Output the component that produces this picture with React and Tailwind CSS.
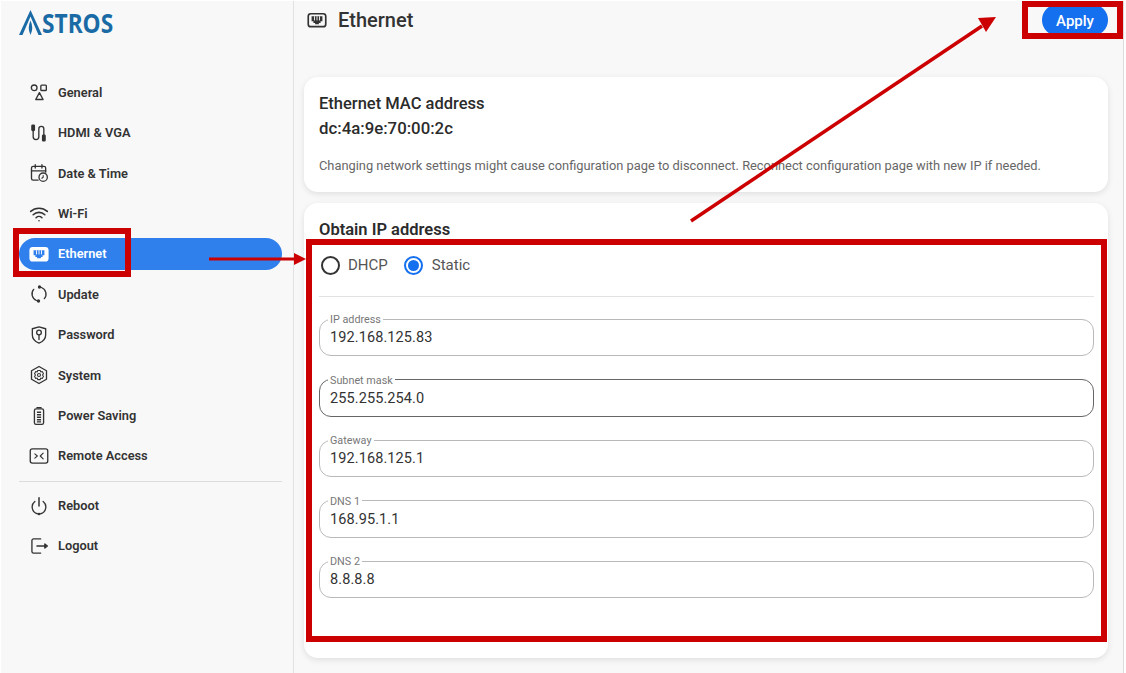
import { Wifi } from 'lucide-react'

const Svg = ({ children, className = 'w-5 h-5' }) => (
  <svg viewBox="0 0 24 24" fill="none" stroke="currentColor" strokeWidth="1.6" strokeLinecap="round" strokeLinejoin="round" className={className}>
    {children}
  </svg>
)

const GeneralIcon = () => (
  <Svg>
    <circle cx="6.2" cy="5.8" r="3.4" />
    <rect x="14.2" y="2.6" width="6.6" height="6.4" rx="1" />
    <path d="M12.5 11.5l4.4 8.3H8.1z" />
  </Svg>
)

const CableIcon = () => (
  <Svg>
    <path d="M5 8v8.5a3.4 3.4 0 0 0 6.8 0V7a3 3 0 0 1 6 0v8" />
    <rect x="3.5" y="2.5" width="3" height="6.5" rx="0.8" fill="currentColor" />
    <rect x="16.3" y="14.5" width="3" height="7" rx="0.8" fill="currentColor" />
  </Svg>
)

const CalendarIcon = () => (
  <Svg>
    <path d="M11 20.5H5a2 2 0 0 1-2-2V6a2 2 0 0 1 2-2h13a2 2 0 0 1 2 2v5" />
    <path d="M7.5 2v4M15.5 2v4M3 9.5h17" />
    <circle cx="17" cy="17" r="5" />
    <path d="M17 15v2.2l-1.6 1" strokeWidth="1.3" />
  </Svg>
)

// port with stripes, the stripe colour follows the surface behind it
const EthernetIcon = ({ className = 'w-5 h-5', frame = 'none', stripe = '#f8f8f8' }) => (
  <Svg className={className}>
    <rect x="1.5" y="4.5" width="21" height="15.5" rx="3" strokeWidth="2" fill={frame} />
    <path d="M5.500 7.500h13v6h-2.200v2h-2v1.500h-4.600v-1.500h-2v-2H5.500z" fill={frame === 'none' ? 'currentColor' : stripe} stroke="none" />
    <path d="M9 7.500v5M12 7.500v5M15 7.500v5" stroke={frame === 'none' ? stripe : '#ffffff'} strokeWidth="1.1" strokeLinecap="butt" />
  </Svg>
)

const UpdateIcon = () => (
  <Svg>
    <path d="M15 4.2a8.5 8.5 0 0 1 3.4 13.4" />
    <path d="M9 19.8A8.5 8.5 0 0 1 5.6 6.4" />
    <circle cx="12.6" cy="3.6" r="1.2" fill="currentColor" />
    <circle cx="11.4" cy="20.4" r="1.2" fill="currentColor" />
  </Svg>
)

const ShieldKeyIcon = () => (
  <Svg>
    <path d="M12 2.2l8 2.3v7.5c0 4.5-3.3 7.9-8 9.8-4.7-1.9-8-5.3-8-9.8V4.500z" />
    <circle cx="12" cy="9" r="2.8" />
    <path d="M12 11.8v5.700" />
  </Svg>
)

const SystemIcon = () => (
  <Svg>
    <path d="M12 1.800l9 5.100v10.200l-9 5.100-9-5.100V6.900z" />
    <path d="M10.500 6.500h3l.6 1.800 1.800-.4 1.500 2.600-1.300 1.500 1.300 1.500-1.500 2.600-1.800-.4-.6 1.800h-3l-.6-1.800-1.800.4-1.500-2.600 1.300-1.500-1.300-1.500 1.500-2.600 1.800.4z" strokeWidth="1.300" />
    <circle cx="12" cy="12" r="1.800" strokeWidth="1.300" />
  </Svg>
)

const BatteryIcon = () => (
  <Svg>
    <rect x="6.500" y="3.500" width="11" height="18.500" rx="2" />
    <path d="M9.500 2h5" />
    <path d="M9.500 7.500h5M9.500 10.500h5M9.500 13.500h5M9.500 16.500h5M9.500 19h5" strokeWidth="1.700" strokeLinecap="butt" />
  </Svg>
)

const RemoteIcon = () => (
  <Svg>
    <rect x="1.500" y="3.500" width="21" height="17" rx="2.500" />
    <path d="M7 9.500l3 2.500-3 2.500" strokeWidth="1.300" />
    <path d="M17 8.500l-3.500 3.500 3.500 3.500" strokeWidth="1.300" />
  </Svg>
)

const RebootIcon = () => (
  <Svg>
    <path d="M12 2v10" strokeWidth="1.800" />
    <path d="M7 6.500a8.500 8.500 0 0 0 3 14.800" />
    <path d="M17 6.500a8.500 8.500 0 0 1-3 14.800" />
    <circle cx="12" cy="21.500" r="0.700" fill="currentColor" />
  </Svg>
)

const LogoutIcon = () => (
  <Svg>
    <path d="M14 3.500H5.500a2 2 0 0 0-2 2v13a2 2 0 0 0 2 2H14" />
    <path d="M9.500 12H20" />
    <path d="M19 9.500l3 2.500-3 2.500z" fill="currentColor" />
  </Svg>
)

const navItems = [
  { name: 'General', icon: <GeneralIcon /> },
  { name: 'HDMI & VGA', icon: <CableIcon /> },
  { name: 'Date & Time', icon: <CalendarIcon /> },
  { name: 'Wi-Fi', icon: <Wifi className="w-5 h-5" strokeWidth={1.9} /> },
  { name: 'Ethernet', icon: <EthernetIcon frame="#ffffff" stripe="#2f80ed" />, active: true },
  { name: 'Update', icon: <UpdateIcon /> },
  { name: 'Password', icon: <ShieldKeyIcon /> },
  { name: 'System', icon: <SystemIcon /> },
  { name: 'Power Saving', icon: <BatteryIcon /> },
  { name: 'Remote Access', icon: <RemoteIcon /> },
]

const bottomItems = [
  { name: 'Reboot', icon: <RebootIcon /> },
  { name: 'Logout', icon: <LogoutIcon /> },
]

const fields = [
  { label: 'IP address', value: '192.168.125.83' },
  { label: 'Subnet mask', value: '255.255.254.0', focused: true },
  { label: 'Gateway', value: '192.168.125.1' },
  { label: 'DNS 1', value: '168.95.1.1' },
  { label: 'DNS 2', value: '8.8.8.8' },
]

const NavItem = ({ item }) => (
  <div
    className={
      'flex items-center gap-[9px] h-8 pl-[10px] pt-px rounded-full text-[12.8px] font-semibold ' +
      (item.active ? 'bg-[#2f80ed] text-white' : 'text-[#333333]')
    }
  >
    {item.icon}
    <span>{item.name}</span>
  </div>
)

const Field = ({ field }) => (
  <fieldset
    className={
      'h-[42px] rounded-xl border px-[10px] ' +
      (field.focused ? 'border-[#666666]' : 'border-[#b9b9b9]')
    }
  >
    <legend className="-ml-[2px] px-[2px] text-[10.8px] leading-[10px] text-[#777777]">
      <span className="relative top-[1px]">{field.label}</span>
    </legend>
    <div className="pt-[3px] text-[14.5px] leading-[22px] tracking-[0.1px] text-[#333333]">{field.value}</div>
  </fieldset>
)

const Annotations = () => (
  <>
    <div className="absolute left-[13px] top-[228px] w-[118px] h-[49px] border-[6px] border-[#cc0000]" />
    <div className="absolute left-[1022px] top-[1px] w-[101px] h-[38px] border-[6px] border-[#cc0000]" />
    <div className="absolute left-[306px] top-[239px] w-[801px] h-[403px] border-[6px] border-[#cc0000]" />
    <svg className="absolute inset-0 w-[1126px] h-[673px] pointer-events-none" viewBox="0 0 1126 673">
      <path d="M209 259H296" stroke="#cc0000" strokeWidth="3" />
      <path d="M294 253L306 259L294 265z" fill="#cc0000" />
      <path d="M691 221L982 26" stroke="#cc0000" strokeWidth="3.500" />
      <path d="M996 17L978 18L986 32z" fill="#cc0000" />
    </svg>
  </>
)

export default function App() {
  return (
    <div className="relative w-[1126px] h-[673px] overflow-hidden bg-white pt-px pl-px pr-[2px] [font-family:Roboto,sans-serif]">
      <div className="flex h-full bg-[#f8f8f8] border-r border-[#dddddd]">
        <aside className="w-[293px] shrink-0 border-r border-[#e2e2e2] pl-[18px] pr-[11px]">
          <div className="flex items-end h-[34px] text-[#1a6ba5]">
            <svg viewBox="0 0 23 25" className="w-[23px] h-[25px] shrink-0">
              <path d="M11.500 0L23 25H19.500L11.500 6.500 3.500 25H0z" fill="currentColor" />
              <path d="M11.500 10.500Q15 18 11.500 25Q8 18 11.500 10.500z" fill="currentColor" />
            </svg>
            <span className="origin-left scale-x-[0.84] text-[27px] leading-[25px] font-bold [font-family:'Open_Sans',sans-serif]">STROS</span>
          </div>
          <nav className="mt-[41px] flex flex-col gap-[8.400px]">
            {navItems.map((item) => (
              <NavItem key={item.name} item={item} />
            ))}
          </nav>
          <div className="mt-[9px] mb-2 h-px bg-[#dddddd]" />
          <div className="flex flex-col gap-2">
            {bottomItems.map((item) => (
              <NavItem key={item.name} item={item} />
            ))}
          </div>
        </aside>

        <main className="flex-1 pl-[10px] pr-[15px]">
          <div className="flex items-center justify-between h-[38px]">
            <div className="flex items-center gap-[11px] text-[#333333]">
              <div className="ml-[3px]">
                <EthernetIcon className="w-5 h-5" />
              </div>
              <h1 className="text-[20px] font-medium text-[#333333]">Ethernet</h1>
            </div>
            <button className="w-[66px] h-8 pt-[2px] rounded-full bg-[#1570ef] text-[15px] font-medium text-white">Apply</button>
          </div>

          <section className="mt-[38px] h-[115px] rounded-[14px] bg-white pl-[15px] pr-[14px] pt-[17px] shadow-[0_2px_6px_rgba(0,0,0,0.1)]">
            <h2 className="text-[16.500px] leading-5 font-medium text-[#2b2b2b]">Ethernet MAC address</h2>
            <p className="mt-1 text-[16.800px] leading-5 font-medium text-[#2b2b2b]">dc:4a:9e:70:00:2c</p>
            <p className="mt-[20px] text-[12.850px] leading-4 text-[#666666]">
              Changing network settings might cause configuration page to disconnect. Reconnect configuration page with new IP if needed.
            </p>
          </section>

          <section className="mt-[11px] h-[455px] rounded-[14px] bg-white pl-[15px] pr-[14px] pt-[17px] shadow-[0_2px_6px_rgba(0,0,0,0.1)]">
            <h2 className="text-[16.500px] leading-5 font-semibold text-[#2b2b2b]">Obtain IP address</h2>
            <div className="flex items-center h-[20px] mt-[15px] ml-[2px] text-[15px] text-[#555555]">
              <span className="w-[19px] h-[19px] rounded-full border-2 border-[#333333]" />
              <span className="ml-2">DHCP</span>
              <span className="ml-4 w-[19px] h-[19px] rounded-full border-2 border-[#1570ef] flex items-center justify-center">
                <span className="w-[11px] h-[11px] rounded-full bg-[#1570ef]" />
              </span>
              <span className="ml-[9px]">Static</span>
            </div>
            <div className="mt-[21px] h-px bg-[#e2e2e2]" />
            <div className="mt-[17px] flex flex-col gap-[18.500px]">
              {fields.map((field) => (
                <Field key={field.label} field={field} />
              ))}
            </div>
          </section>
        </main>
      </div>
      <Annotations />
    </div>
  )
}
